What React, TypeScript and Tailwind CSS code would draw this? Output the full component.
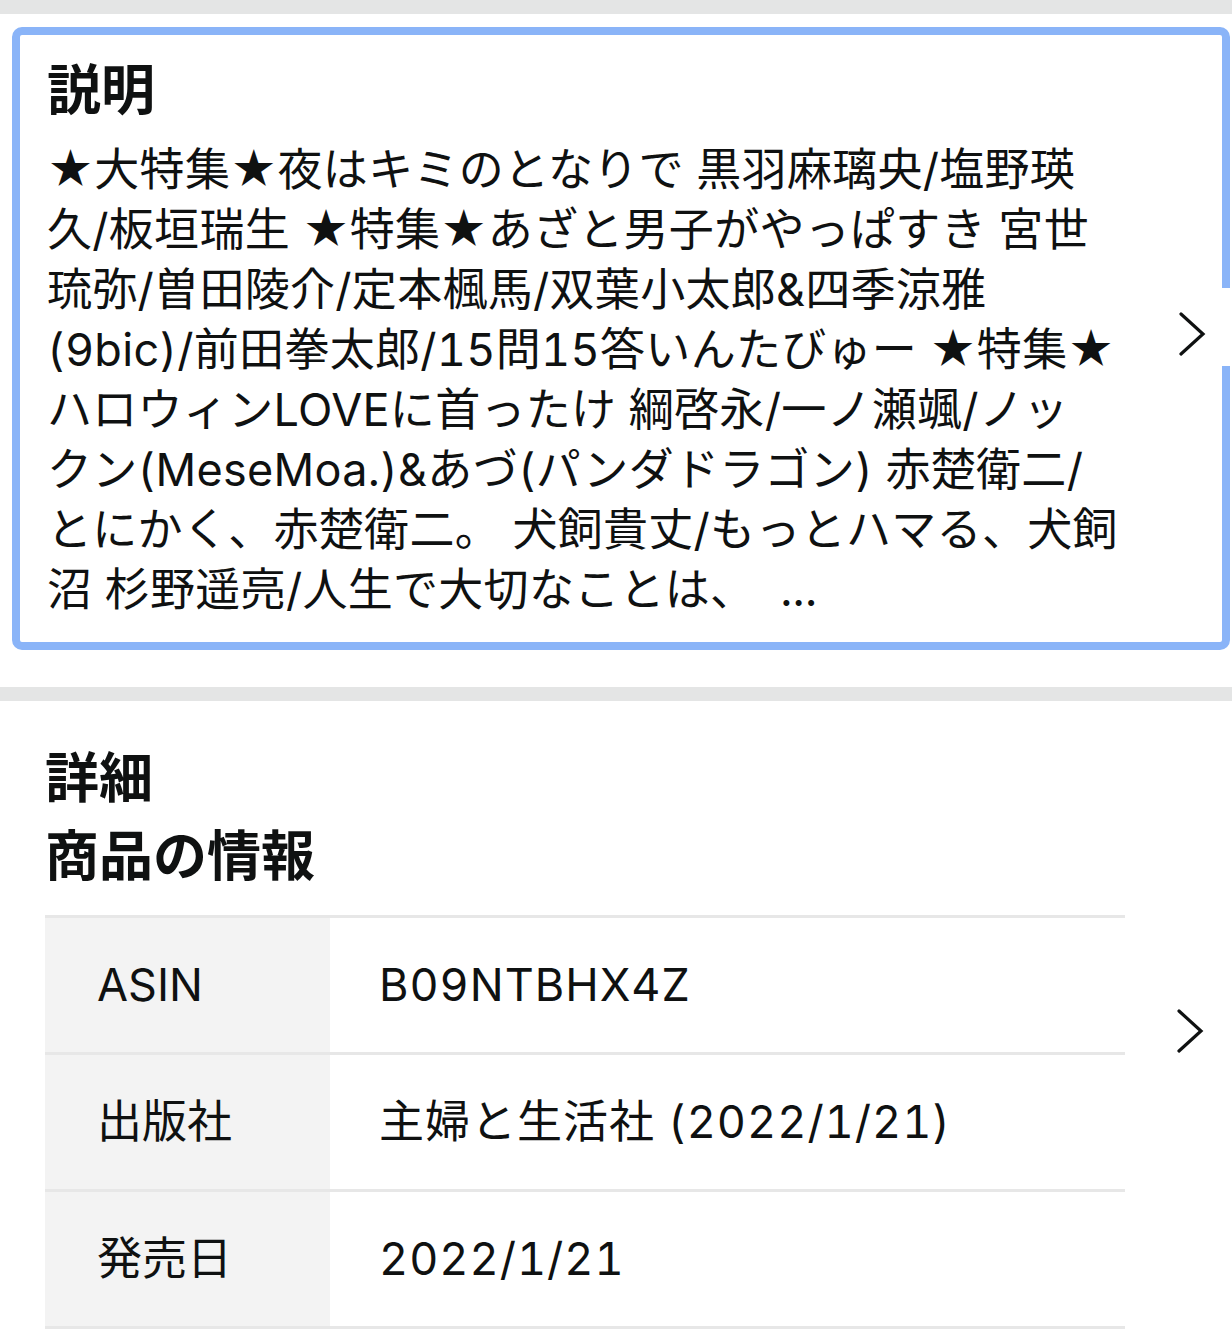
const lines = [
  "★大特集★夜はキミのとなりで 黒羽麻璃央/塩野瑛",
  "久/板垣瑞生 ★特集★あざと男子がやっぱすき 宮世",
  "琉弥/曽田陵介/定本楓馬/双葉小太郎&四季涼雅",
  "(9bic)/前田拳太郎/15問15答いんたびゅー ★特集★",
  "ハロウィンLOVEに首ったけ 綱啓永/一ノ瀬颯/ノッ",
  "クン(MeseMoa.)&あづ(パンダドラゴン) 赤楚衛二/",
  "とにかく、赤楚衛二。 犬飼貴丈/もっとハマる、犬飼",
  "沼 杉野遥亮/人生で大切なことは、\u00a0\u00a0...",
];

const details = [
  { label: "ASIN", value: "B09NTBHX4Z" },
  { label: "出版社", value: "主婦と生活社 (2022/1/21)" },
  { label: "発売日", value: "2022/1/21" },
];

const Chevron = () => (
  <svg width="28" height="44" viewBox="0 0 28 44" fill="none">
    <polyline points="3,2 25,22 3,42" stroke="#0f1111" strokeWidth="3.2" strokeLinecap="round" strokeLinejoin="miter" />
  </svg>
);

const App = () => {
  return (
    <div className="min-h-[1330px] bg-white text-[#0f1111] tabular-nums font-[Inter,'Noto_Sans_CJK_JP',sans-serif]">
      <div className="h-[14px] bg-[#e4e5e5]" />

      <div className="pt-[13px] pl-[12px] pr-[2px] pb-[37px]">
        <div className="relative rounded-[10px] border-[8px] border-[#8ab4f8] pl-[27px] pr-[20px] pt-[26px] pb-[22px]">
          <h2 className="text-[54px] leading-[60px] font-bold">説明</h2>
          <div className="mt-[19px] text-[45px] leading-[60px] tracking-[0.3px]">
            {lines.map(l => <div key={l} className="whitespace-nowrap">{l}</div>)}
          </div>
          <div className="absolute right-[-8px] top-[253px] flex h-[78px] w-[70px] items-start justify-start bg-white pl-[18px] pt-[24px]">
            <Chevron />
          </div>
        </div>
      </div>

      <div className="h-[14px] bg-[#e4e5e5]" />

      <div className="relative pl-[45px] pt-[39px]">
        <h2 className="text-[54px] leading-[78px] font-bold">詳細</h2>
        <h3 className="text-[54px] leading-[78px] font-bold">商品の情報</h3>
        <div className="mt-[19px] w-[1080px] border-b-[3px] border-[#e7e7e7]">
          {details.map(d => (
            <div key={d.label} className="flex h-[137px] border-t-[3px] border-[#e7e7e7] text-[45px]">
              <div className="flex w-[285px] items-center bg-[#f3f3f3] pl-[52px]">{d.label}</div>
              <div className="flex flex-1 items-center pl-[49px] tracking-[1px]">{d.value}</div>
            </div>
          ))}
        </div>
        <div className="absolute right-[28px] top-[308px]">
          <Chevron />
        </div>
      </div>
    </div>
  );
}

export default App;
